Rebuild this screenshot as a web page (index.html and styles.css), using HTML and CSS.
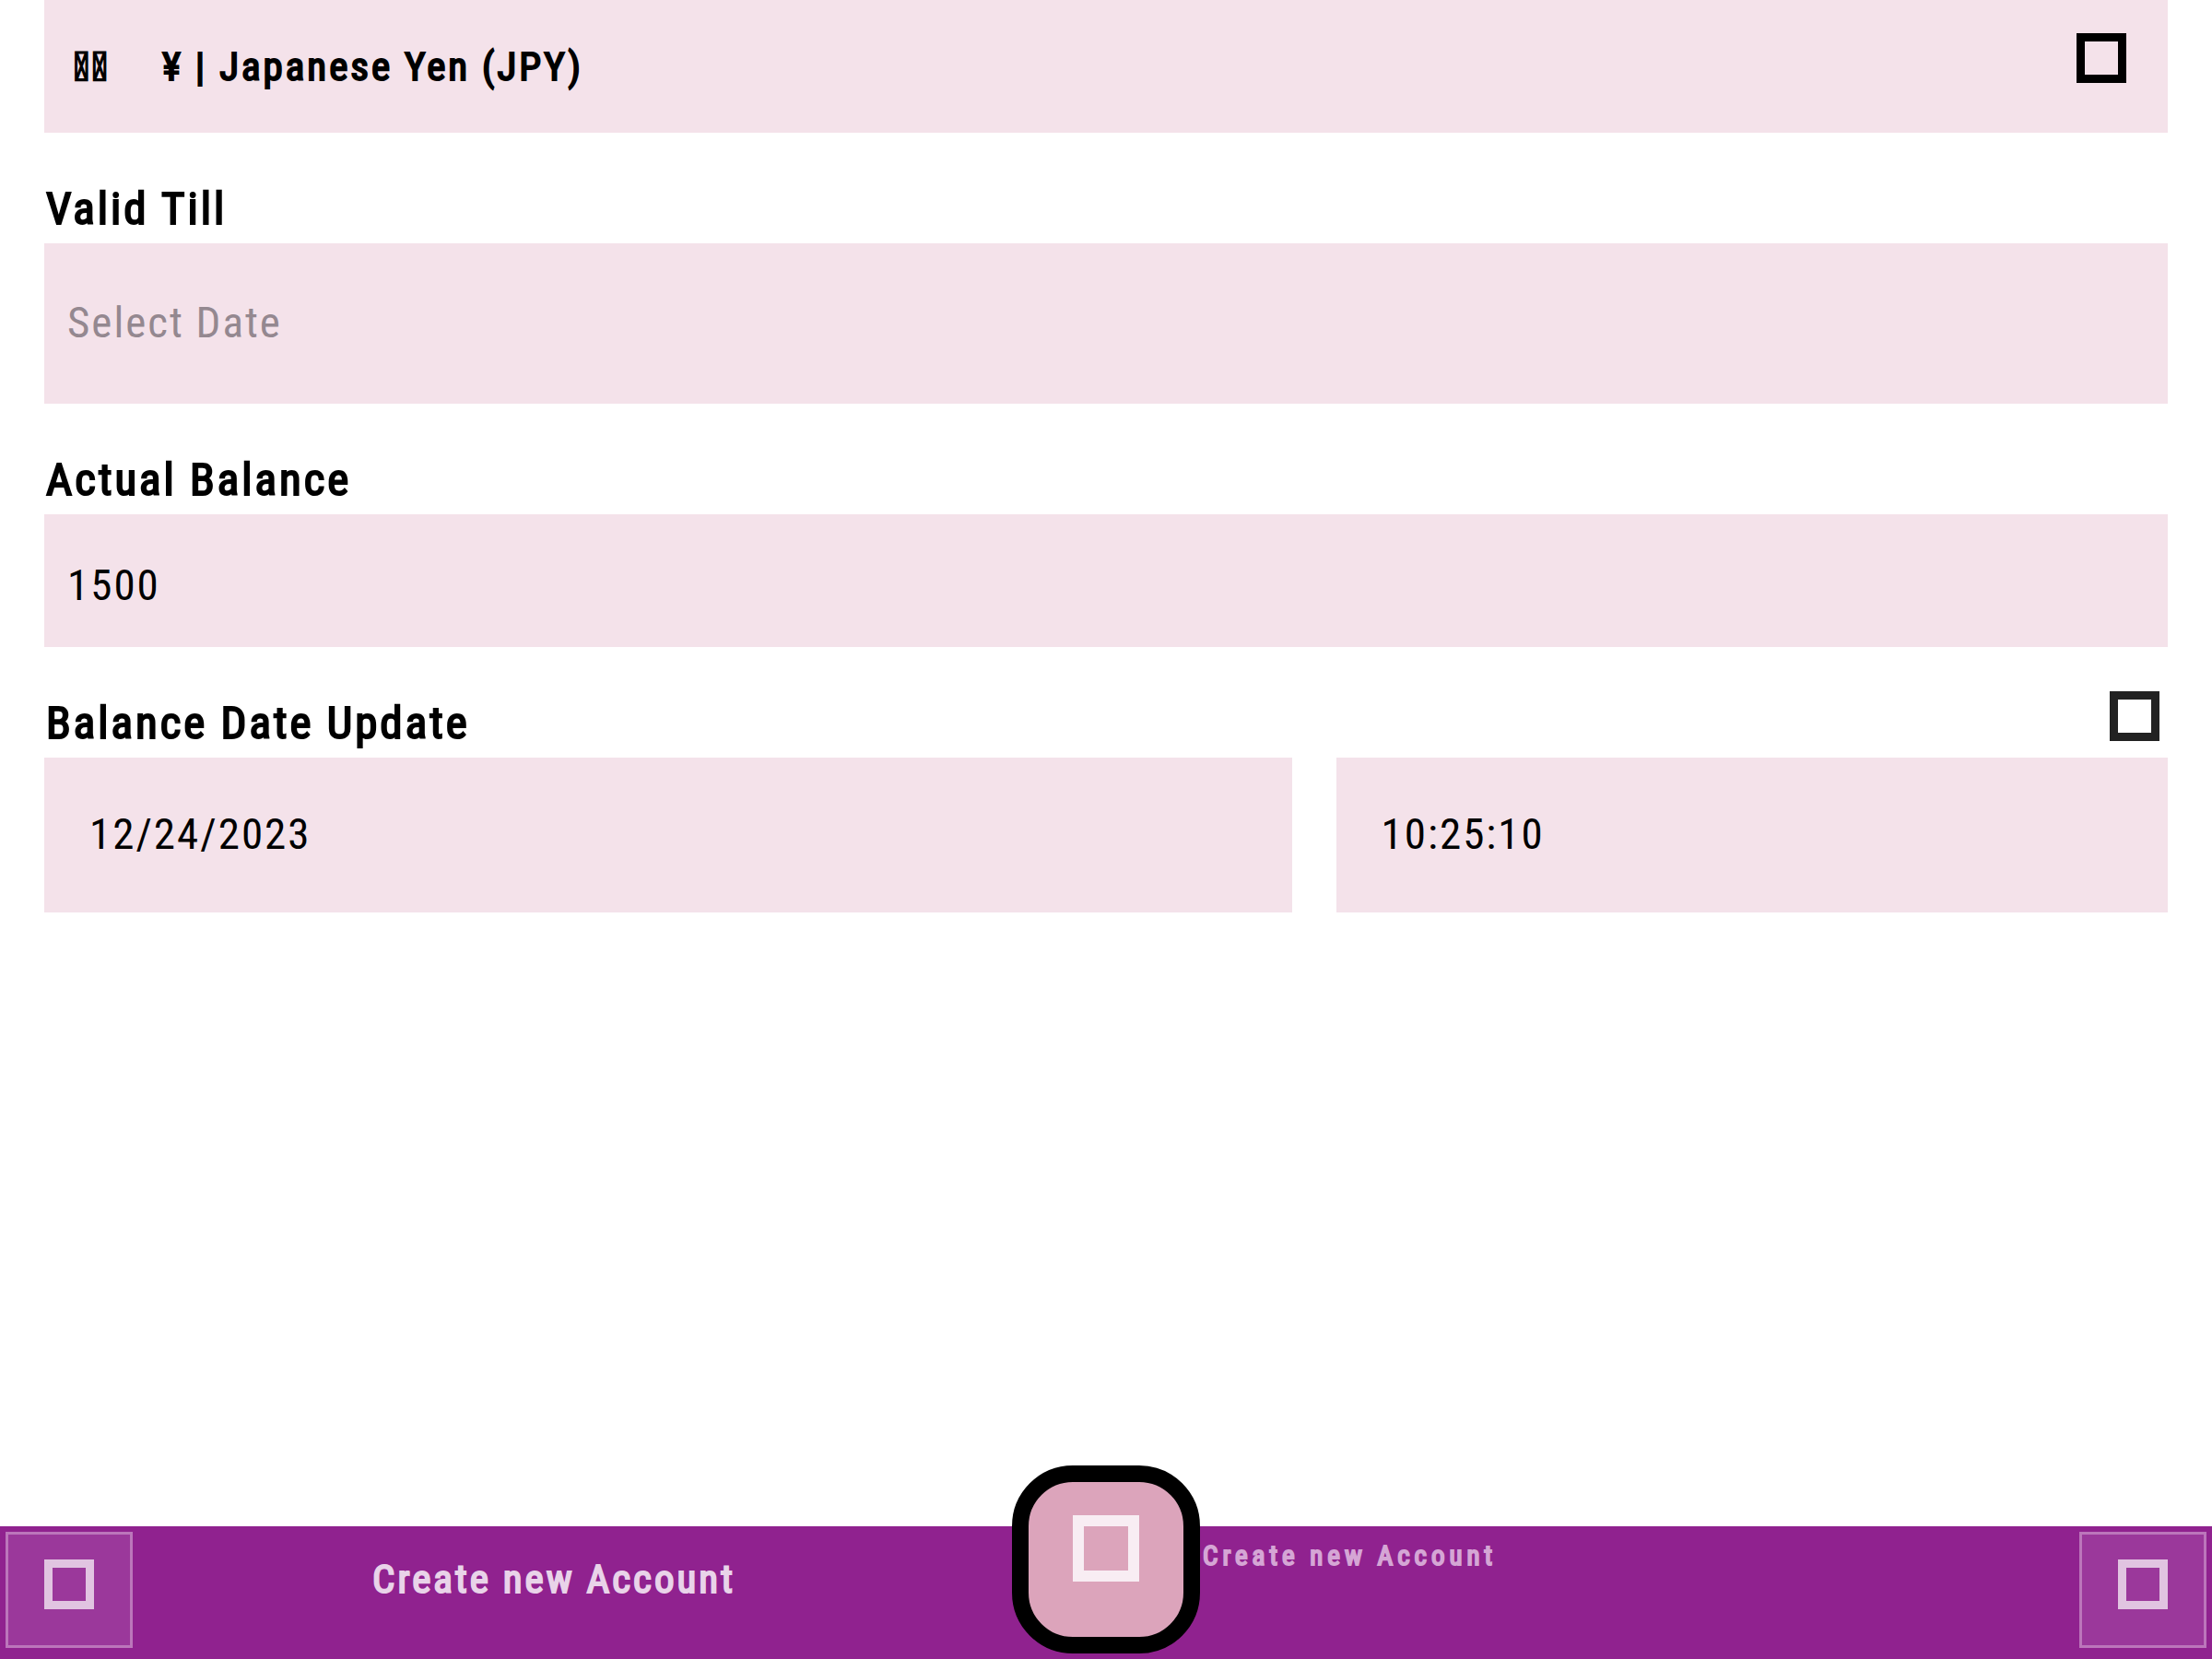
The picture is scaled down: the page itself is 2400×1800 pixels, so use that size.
FILE: index.html
```html
<!DOCTYPE html>
<html lang="en">
<head>
<meta charset="utf-8">
<meta name="viewport" content="width=device-width, initial-scale=1">
<title>Create new Account</title>
<link rel="stylesheet" href="styles.css">
</head>
<body>
<main class="form">
  <button class="currency strong" type="button">
    <span class="flag">&#xF1234;&#xF1234;</span>
    <span class="currency-name">¥ | Japanese Yen (JPY)</span>
    <span class="icon"></span>
  </button>

  <div class="head"><label class="label strong" for="valid">Valid Till</label></div>
  <input class="field field-tall" id="valid" type="text" placeholder="Select Date">

  <div class="head"><label class="label strong" for="balance">Actual Balance</label></div>
  <input class="field" id="balance" type="text" value="1500">

  <div class="head">
    <label class="label strong" for="date">Balance Date Update</label>
    <button class="refresh" type="button" aria-label="Set to now"><span class="icon"></span></button>
  </div>
  <div class="pair">
    <input class="field field-moment" id="date" type="text" value="12/24/2023">
    <input class="field field-moment" type="text" value="10:25:10" aria-label="Balance time">
  </div>
</main>

<footer class="bar">
  <div class="side">
    <button class="tool" type="button" aria-label="Back"><span class="icon"></span></button>
    <h1 class="title strong">Create new Account</h1>
  </div>
  <button class="fab" type="button" aria-label="Save"><span class="icon icon-large"></span></button>
  <div class="side side-end">
    <span class="caption">Create new Account</span>
    <button class="tool" type="button" aria-label="Menu"><span class="icon"></span></button>
  </div>
</footer>
</body>
</html>
```
FILE: styles.css
```css
* { box-sizing: border-box; }

body {
  margin: 0;
  min-height: 100vh;
  display: flex;
  flex-direction: column;
  background: #fff;
  color: #000;
  font-family: "Roboto Condensed", Roboto, sans-serif;
}

button, input {
  margin: 0;
  border: 0;
  border-radius: 0;
  padding: 0;
  background: none;
  color: inherit;
  font: inherit;
  letter-spacing: inherit;
}

.form {
  flex: 1;
  padding: 0 48px;
}

/* Regular weight thickened evenly, lighter in shape than the bold cut */
.strong {
  font-weight: 400;
  letter-spacing: 3px;
  -webkit-text-stroke: 2px currentColor;
}

.icon {
  display: block;
  flex: none;
  width: 54px;
  height: 54px;
  border: 9px solid currentColor;
}

.icon-large {
  width: 72px;
  height: 72px;
  border-width: 12px;
}

.currency {
  display: flex;
  align-items: center;
  width: 100%;
  height: 144px;
  padding: 0 45px 0 32px;
  background: #f4e2ea;
  font-size: 43px;
  text-align: left;
}

.currency .icon {
  margin: 0 0 18px auto;
}

.flag { width: 96px; }

.head {
  display: flex;
  justify-content: space-between;
  align-items: flex-end;
  height: 120px;
  padding: 0 9px 6px 2px;
}

.label {
  font-size: 49px;
  line-height: 62px;
}

.refresh {
  padding-bottom: 12px;
  color: #222;
}

.field {
  display: block;
  width: 100%;
  height: 144px;
  padding: 9px 25px 0;
  background: #f4e2ea;
  font-size: 47px;
  letter-spacing: 2px;
}

.field::placeholder {
  color: #948890;
  opacity: 1;
}

.field-tall {
  height: 174px;
  padding: 0 25px 4px;
}

.field-moment {
  height: 168px;
  padding: 0 49px 4px;
}

.pair {
  display: grid;
  grid-template-columns: 3fr 2fr;
  gap: 48px;
}

.bar {
  display: grid;
  grid-template-columns: 1fr 204px 1fr;
  height: 144px;
  background: #90228f;
}

.side {
  display: flex;
  justify-content: space-between;
  padding: 6px;
}

.side-end { padding-left: 3px; }

.tool {
  display: flex;
  justify-content: center;
  align-items: center;
  width: 138px;
  height: 126px;
  padding-bottom: 12px;
  border: 3px solid #bc76bb;
  background: #9b389b;
  color: #e1c4e1;
}

.title {
  flex: 1;
  margin: 0;
  padding-right: 34px;
  color: #e9d3e9;
  font-size: 43px;
  line-height: 102px;
  text-align: center;
}

.caption {
  color: #d5a6d5;
  font-size: 29px;
  font-weight: 400;
  line-height: 52px;
  letter-spacing: 5px;
  -webkit-text-stroke: 2px currentColor;
}

.fab {
  display: flex;
  justify-content: center;
  align-items: center;
  height: 204px;
  margin-top: -66px;
  padding-bottom: 24px;
  border: 18px solid #000;
  border-radius: 66px;
  background: #dca4bb;
  color: #f8edf3;
}
```
